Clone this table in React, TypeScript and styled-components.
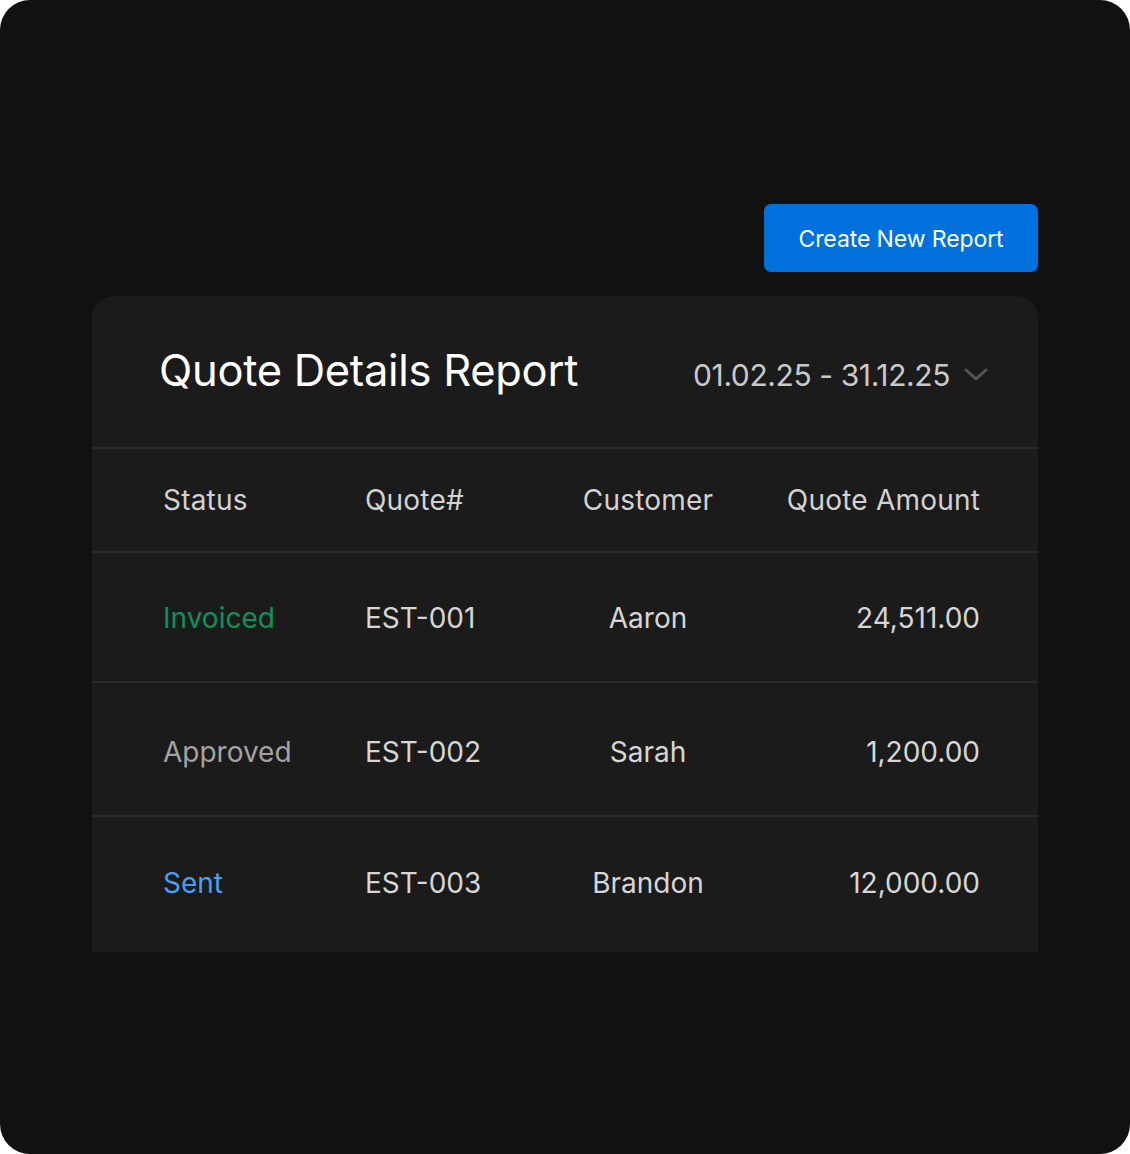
import React from "react";
import styled, { createGlobalStyle } from "styled-components";

const Global = createGlobalStyle`
  html, body { margin: 0; padding: 0; background: #ffffff; }
  body { font-family: Inter, "Noto Sans", sans-serif; -webkit-font-smoothing: antialiased; }
`;

const Frame = styled.div`
  width: 1130px;
  height: 1154px;
  box-sizing: border-box;
  background: #111111;
  border-radius: 30px;
  padding: 204px 92px 0 92px;
  display: flex;
  flex-direction: column;
  align-items: stretch;
`;

const Toolbar = styled.div`
  display: flex;
  justify-content: flex-end;
  margin-bottom: 24px;
`;

const PrimaryButton = styled.button`
  height: 68px;
  width: 274px;
  border: none;
  border-radius: 7px;
  background: #0071dc;
  color: #ffffff;
  font-family: Inter, "Noto Sans", sans-serif;
  font-size: 23px;
  font-weight: 400;
  letter-spacing: -0.1px;
  padding: 2px 0 0 0;
  cursor: pointer;
`;

const Panel = styled.section`
  background: #1b1b1b;
  border-radius: 22px 22px 0 0;
  overflow: hidden;
`;

const PanelHeader = styled.header`
  height: 153px;
  box-sizing: border-box;
  display: flex;
  align-items: center;
  justify-content: space-between;
  padding: 0 50px 0 67px;
  border-bottom: 2px solid #2a2a2a;
`;

const Title = styled.h1`
  margin: 0 0 4px 0;
  font-size: 43.5px;
  font-weight: 400;
  color: #ffffff;
  letter-spacing: -0.3px;
`;

const DateRange = styled.div`
  display: flex;
  align-items: center;
  gap: 14px;
  margin-top: 6px;
  font-size: 30px;
  color: #c9c9c9;
  letter-spacing: -0.4px;
`;

const Row = styled.div<{ $height: number; $shift?: number; $last?: boolean }>`
  display: grid;
  grid-template-columns: 202px 190px 186px 239px;
  align-items: center;
  height: ${(p) => p.$height}px;
  box-sizing: border-box;
  padding: ${(p) => Math.max(0, (p.$shift || 0) * 2)}px 58px
    ${(p) => Math.max(0, -(p.$shift || 0) * 2)}px 71px;
  border-bottom: ${(p) => (p.$last ? "none" : "2px solid #2a2a2a")};
`;

const Cell = styled.div<{ $align?: "left" | "center" | "right"; $color?: string }>`
  font-size: 28px;
  color: ${(p) => p.$color || "#d6d6d6"};
  text-align: ${(p) => p.$align || "left"};
  letter-spacing: 0px;
  white-space: nowrap;
`;

const HeadCell = styled(Cell)`
  color: #d2d2d2;
  letter-spacing: 0.2px;
`;

const rows = [
  { status: "Invoiced", color: "#0e925c", quote: "EST-001", customer: "Aaron", amount: "24,511.00", h: 130, shift: 1 },
  { status: "Approved", color: "#a3a3a3", quote: "EST-002", customer: "Sarah", amount: "1,200.00", h: 134, shift: 3 },
  { status: "Sent", color: "#4a9ff2", quote: "EST-003", customer: "Brandon", amount: "12,000.00", h: 135, shift: -2 },
];

const Chevron = () => (
  <svg width="24" height="14" viewBox="0 0 24 14" fill="none">
    <path d="M2 2l10 9 10-9" stroke="#555555" strokeWidth="3" strokeLinecap="round" strokeLinejoin="round" />
  </svg>
);

export default function App() {
  return (
    <>
      <Global />
      <Frame>
        <Toolbar>
          <PrimaryButton>Create New Report</PrimaryButton>
        </Toolbar>
        <Panel>
          <PanelHeader>
            <Title>Quote Details Report</Title>
            <DateRange>
              <span>01.02.25 - 31.12.25</span>
              <Chevron />
            </DateRange>
          </PanelHeader>
          <Row $height={104}>
            <HeadCell>Status</HeadCell>
            <HeadCell>Quote#</HeadCell>
            <HeadCell $align="center">Customer</HeadCell>
            <HeadCell $align="right">Quote Amount</HeadCell>
          </Row>
          {rows.map((r, i) => (
            <Row key={r.quote} $height={r.h} $shift={r.shift} $last={i === rows.length - 1}>
              <Cell $color={r.color}>{r.status}</Cell>
              <Cell>{r.quote}</Cell>
              <Cell $align="center">{r.customer}</Cell>
              <Cell $align="right">{r.amount}</Cell>
            </Row>
          ))}
        </Panel>
      </Frame>
    </>
  );
}
